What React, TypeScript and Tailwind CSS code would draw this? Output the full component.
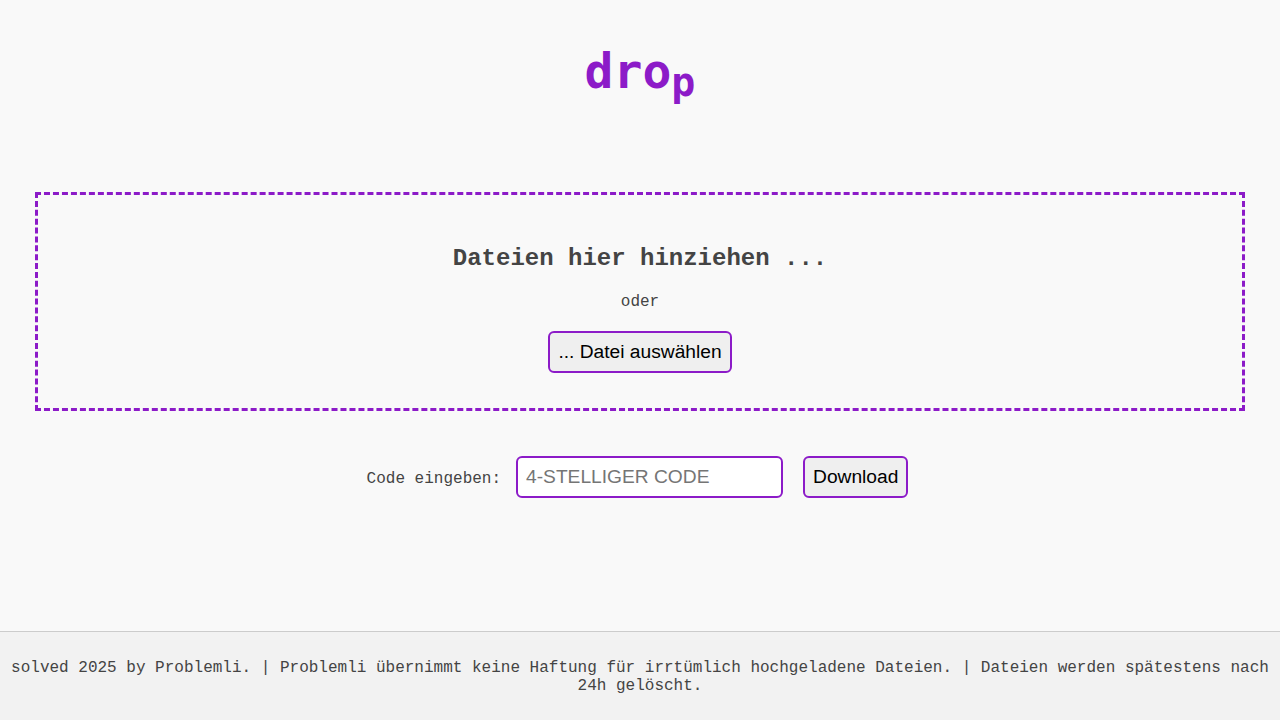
export default function App() {
  return (
    <div className="flex min-h-screen flex-col bg-[#f9f9f9] font-['Liberation_Mono',monospace] text-[#444]">
      <header className="pt-[47px] text-center">
        <h1 className="font-['DejaVu_Sans_Mono',monospace] text-[48px] font-bold leading-none text-[#8c1bc8]">
          dro<sub className="-bottom-[8px] text-[40px]">p</sub>
        </h1>
      </header>

      <main className="mt-[97px]">
        <div className="mx-[35px] flex flex-col items-center border-[3px] border-dashed border-[#8c1bc8] pt-[50px] pb-[35px]">
          <h2 className="text-[24px] font-bold leading-[28px]">Dateien hier hinziehen ...</h2>
          <p className="mt-[20px] text-[16px] leading-[18px]">oder</p>
          <button className="mt-[20px] h-[42px] rounded-[6px] border-2 border-[#8c1bc8] bg-[#efefef] px-[8px] font-['Liberation_Sans',Arial,sans-serif] text-[19.2px] text-black">
            ... Datei auswählen
          </button>
        </div>

        <div className="mt-[45px] mr-[5px] flex items-center justify-center">
          <label className="mt-[3px] text-[16px]">Code eingeben:</label>
          <input
            type="text"
            placeholder="4-STELLIGER CODE"
            className="ml-[15px] h-[42px] w-[267px] rounded-[6px] border-2 border-[#8c1bc8] bg-white px-[8px] font-['Liberation_Sans',Arial,sans-serif] text-[19.2px] text-black placeholder:text-[#757575] outline-none"
          />
          <button className="ml-[20px] h-[42px] rounded-[6px] border-2 border-[#8c1bc8] bg-[#efefef] px-[8px] font-['Liberation_Sans',Arial,sans-serif] text-[19.2px] text-black">
            Download
          </button>
        </div>
      </main>

      <footer className="mt-auto border-t border-[#ccc] bg-[#f2f2f2] px-[4px] pt-[27px] pb-[25px] text-center text-[16px] leading-[18px] text-[#444]">
        solved 2025 by Problemli. | Problemli übernimmt keine Haftung für irrtümlich hochgeladene Dateien. | Dateien werden spätestens nach 24h gelöscht.
      </footer>
    </div>
  );
}
